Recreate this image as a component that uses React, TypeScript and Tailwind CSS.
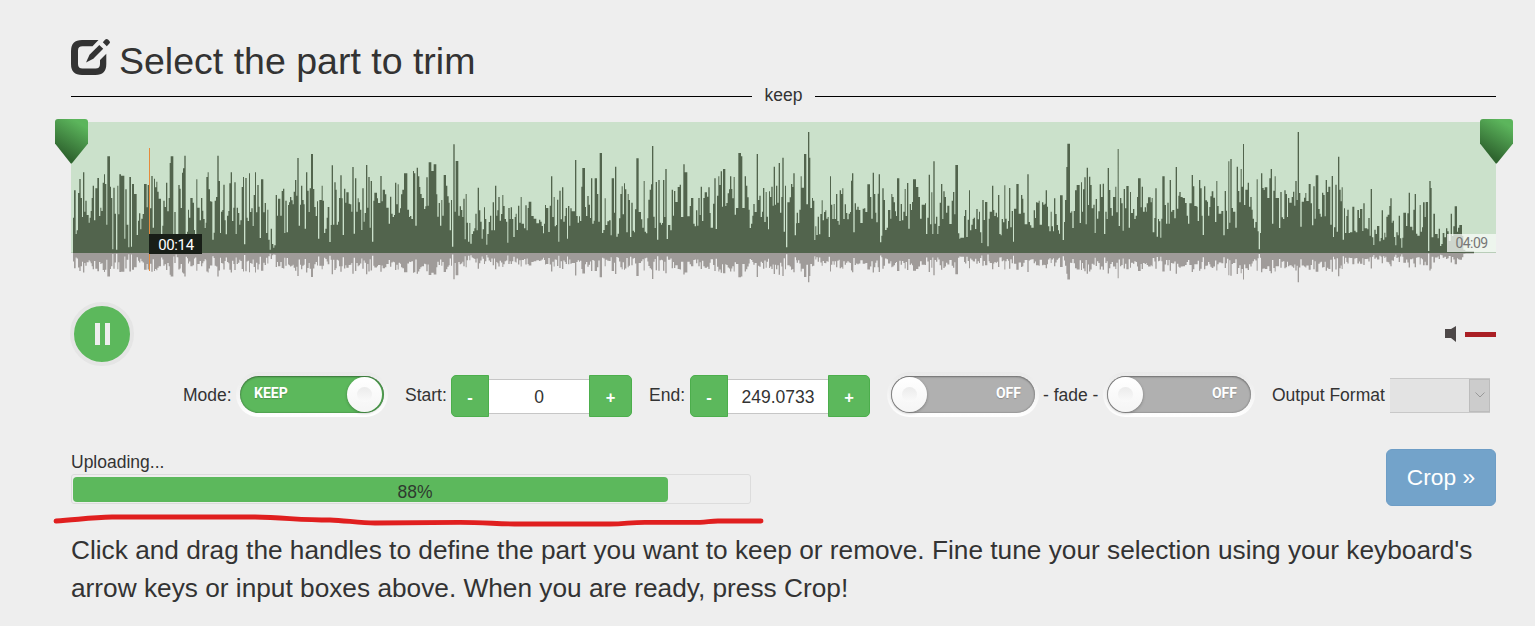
import type { ReactNode } from "react";

/* Amplitude steps: each section lists "x,y" pairs at a third of a pixel. */
const SECTIONS: [number, string][] = [
  [
    50,
    "69,308 72,226 77,357 80,346 84,234 88,192 92,249 96,306 99,172 103,290 106,257 110,300 116,323 119,308 122,288 125,249 128,212 132,316 136,220 142,189 147,303 151,278 154,288 158,203 162,178 165,207 169,329 172,124 180,215 183,249 187,403 190,218 194,296 198,404 202,212 205,298 208,178 213,182 223,371 226,223 230,329 235,397 238,186 243,395 246,207 252,237 260,360 264,317 267,295 271,343 274,311 278,297 282,207 290,277 293,210 300,280 304,183 308,338 312,191 315,217 319,200 322,230 326,251 333,358 337,332 340,257 344,276 348,203 352,289 356,249 359,144 362,124 370,371 373,291 377,395 380,360 385,210 389,221 392,279 396,173 399,160 403,122 407,367 411,350 414,284 417,308 421,249 428,263 432,345 435,359 439,193 442,278 449,316 453,249 457,287 460,312 464,339 467,323 469,186 473,172 476,223 480,259 484,260 487,374 491,353 494,257 498,246 502,122 506,198 510,354 513,290 517,285 520,209 524,316 527,358 531,302 535,288 538,205 542,172 546,318 550,278 553,202 557,357 560,278 564,294 568,329 571,316 575,216 579,186 582,388 586,189 590,308 593,318 597,175 600,291 604,280 608,333 611,240 615,172 618,292 622,210 626,275 629,369 633,193 640,292 644,264 648,354 652,284 655,374 659,404 662,341 666,387 670,398 673,391 677,240 681,302 684,251 691,302 695,228 699,221 703,354 706,257 710,352 714,270 717,262 720,246 724,256 728,268 731,230 735,195 739,242 742,129 746,332 750,269 753,212 757,255 761,268 764,341 768,172 772,227 776,291 779,220 783,117 789,222 793,276 797,303 801,259 804,371 808,255 815,212 818,257 822,354 826,341 830,308 833,276 838,381 842,330 845,151 849,329 853,202 857,224 860,329 864,320 867,249 871,181 875,250 878,360 882,221 886,263 889,232 896,266 900,268 904,290 907,156 911,356 915,190 919,290 923,250 926,262 930,284 934,345 937,220 941,320 944,294 948,150 952,278 955,186 959,338 962,198 966,380 970,257 973,233 981,250 984,264 991,183 995,259 998,224 1005,238 1009,278 1013,278 1016,326 1020,245 1024,296 1028,306 1032,300 1035,203 1039,268 1043,208 1046,293 1050,280 1053,238 1057,224 1062,175 1072,284 1077,306",
  ],
  [
    410,
    "0,303 4,312 9,168 12,175 16,332 20,158 24,184 28,216 31,237 35,249 42,282 46,274 49,187 53,272 56,142 64,168 71,148 79,238 82,305 86,264 90,332 94,255 97,302 101,180 108,212 112,244 116,263 119,346 123,255 126,395 130,88 134,290 137,138 145,302 149,274 153,285 157,306 160,251 164,373 167,237 170,323 174,380 178,324 181,386 185,357 189,349 193,340 196,296 200,346 203,218 207,286 211,320 215,371 218,343 222,277 225,312 229,389 232,357 236,321 240,302 244,346 248,262 252,346 255,212 259,302 262,286 265,246 269,317 273,297 277,240 280,273 284,312 288,320 292,383 295,279 299,312 302,277 306,312 310,366 314,306 317,296 320,345 324,272 328,323 332,246 335,326 342,340 346,271 350,346 353,279 356,260 364,303 371,311 379,325 387,314 391,320 395,333 399,355 402,326 405,270 408,279 415,351 419,272 423,184 427,306 431,246 434,334 438,330 441,254 445,380 448,227 452,313 456,217 460,320 464,303 467,279 471,371 474,273 478,332 481,280 485,289 495,135 499,303 503,323 507,304 510,318 514,215 517,159 525,276 528,303 532,243 536,269 540,309 543,190 547,326 551,317 554,190 561,237 565,320 569,114 576,354 580,345 584,250 587,330 592,319 597,316 602,361 605,190 612,293 615,155 619,365 623,356 627,310 631,237 635,214 638,298 642,205 645,223 649,352 653,237 656,255 660,366 664,263 668,347 672,352 675,283 679,130 686,291 693,313 697,338 701,198 704,350 708,355 712,310 715,254 719,224 723,208 726,93 730,305 734,339 737,201 741,374 745,195 749,323 753,329 756,324 759,195 763,306 766,162 770,372 774,330 781,346 785,224 789,302 792,228 796,261 803,216 809,209 813,306 820,148 824,172 832,304 839,273 843,249 850,326 854,334 858,286 862,332 865,249 869,300 872,215 876,318 880,249 884,232 891,245 895,217 899,294 902,338 909,266 913,190 917,342 921,242 925,184 928,210 932,169 936,275 939,162 946,273 949,264 953,235 957,223 960,184 964,222 967,250 971,186 974,299 978,279 985,114 993,124 997,279 1004,184 1008,212 1012,247 1016,284 1019,339 1023,326 1027,302 1030,267 1034,291 1040,117 1044,255 1048,242 1052,306 1056,290 1059,219 1063,321 1067,231 1070,305 1074,343 1077,229",
  ],
  [
    770,
    "0,246 4,215 8,272 11,155 15,269 18,212 22,263 26,144 30,293 34,246 37,128 41,350 45,212 48,397 52,262 59,247 63,207 67,216 70,175 74,361 78,325 80,293 84,324 88,284 92,184 95,218 102,117 109,268 114,51 118,128 121,279 126,249 129,257 133,375 136,334 139,360 143,305 147,358 151,297 155,256 158,316 162,291 166,286 169,311 173,306 176,366 180,184 183,269 187,312 191,267 194,312 198,237 202,318 206,329 209,226 213,237 217,220 220,312 224,268 228,294 232,313 236,296 240,291 243,197 246,175 250,352 254,265 258,284 262,275 266,285 271,324 278,281 282,280 286,291 292,208 300,246 304,311 308,173 312,237 316,293 319,322 323,236 326,178 330,382 334,362 337,220 341,255 345,345 350,338 354,285 361,311 364,237 367,246 371,262 375,289 378,303 381,190 388,318 392,267 396,316 400,290 404,222 407,303 411,204 415,341 419,267 423,285 426,261 429,193 438,216 445,246 450,311 455,269 465,265 468,357 472,308 476,179 480,328 484,232 487,357 490,139 494,326 498,305 502,357 505,333 509,263 513,207 517,312 520,229 524,246 528,293 532,272 538,327 545,257 549,231 553,298 556,150 564,355 568,371 571,368 582,303 585,285 589,366 593,314 597,226 600,346 604,329 608,312 611,308 615,342 619,282 623,313 627,290 630,352 634,384 637,255 641,315 645,261 652,394 656,311 659,290 666,212 670,285 673,303 677,293 681,307 684,240 688,357 692,361 695,312 699,322 703,211 706,311 710,341 714,318 717,219 721,337 725,288 729,380 732,281 739,207 746,296 753,240 757,251 760,293 764,328 772,178 776,321 780,331 784,338 791,286 795,309 798,262 802,263 806,257 809,329 816,262 820,269 824,266 827,226 831,275 834,334 838,349 842,290 845,334 849,349 852,250 856,297 860,330 864,346 867,356 870,241 878,375 882,321 885,255 889,156 892,86 900,293 904,289 907,339 911,288 915,226 920,210 929,324 933,202 936,290 939,223 943,187 947,328 950,158 954,270 957,185 961,210 965,280 970,269 974,354 977,252 981,311 985,289 989,208 993,246 998,206 1002,357 1006,290 1010,312 1013,159 1017,225 1021,279 1025,302 1029,246 1036,215 1039,292 1043,102 1046,333 1050,249 1054,265 1058,347 1061,222 1065,280 1069,213 1076,338",
  ],
  [
    1130,
    "0,231 3,294 9,282 13,312 17,302 21,246 24,190 32,277 35,215 39,290 44,277 48,290 50,265 54,247 62,262 65,249 68,352 73,309 76,220 80,365 84,312 87,319 91,368 94,311 97,184 104,270 108,326 112,263 116,326 119,195 123,290 127,285 133,310 137,156 141,281 145,242 148,231 152,246 158,249 165,264 170,302 174,326 178,265 185,180 189,214 193,273 200,275 203,318 207,195 211,220 215,302 218,360 222,214 226,256 231,260 234,302 238,276 241,244 245,229 250,248 255,321 259,198 262,273 266,296 274,288 280,361 284,228 288,287 291,342 295,139 298,323 301,132 305,279 309,290 316,338 320,155 324,228 328,262 332,162 335,215 339,87 342,270 346,224 353,203 357,275 361,246 365,284 368,311 372,338 376,321 380,193 383,349 386,403 390,354 393,175 397,219 401,225 404,217 412,249 418,190 422,162 426,326 430,227 434,184 437,249 447,339 451,231 455,307 459,312 463,226 467,237 471,306 474,249 478,263 485,246 489,230 493,272 496,198 500,255 503,51 507,234 511,335 515,260 522,248 526,234 529,258 536,207 542,265 546,331 550,214 554,311 557,181 565,282 569,296 572,305 576,233 580,240 584,304 587,195 591,231 595,215 601,329 605,183 609,366 612,337 616,209 620,350 624,125 628,224 632,259 635,217 638,374 642,280 645,354 649,303 652,284 656,354 660,352 667,275 673,347 677,352 682,285 687,309 690,282 697,348 700,265 704,340 712,343 715,309 719,362 722,222 726,367 730,390 733,344 737,357 741,333 748,379 752,369 755,286 759,374 763,353 766,367 769,305 773,299 778,273 781,250 785,323 788,317 792,366 796,391 799,352 803,361 806,302 810,370 814,398 817,368 820,293 828,333 832,295 836,233 840,335 847,346 850,284 854,237 858,356 862,362 869,270 872,350 876,337 879,262 884,306 887,261 894,408 898,198 902,219 905,367 910,296 915,357 923,370 926,341 930,393 934,387 938,354 943,367 948,340 952,349 956,378 962,296 966,363 970,334 974,274 981,350 984,338 988,330 996,362 1000,404 1006,408 1032,412",
  ],
];

const STEPS = SECTIONS.flatMap(([origin, text]) =>
  text.split(" ").map((pair) => {
    const [x, y] = pair.split(",").map(Number);
    return [origin - 71 + x / 3, (414 - y) / 3] as const;
  }),
);

function outline(base: number, scale: number) {
  let d = `M${STEPS[0][0].toFixed(2)} ${base}`;
  for (const [x, h] of STEPS) d += `H${x.toFixed(2)}V${(base - h * scale).toFixed(2)}`;
  return `${d}H1403V${base}Z`;
}

function Handle({ id, className }: { id: string; className: string }) {
  return (
    <svg className={`absolute -top-[3px] h-[45px] w-[33px] ${className}`} viewBox="0 0 33 45">
      <defs>
        <linearGradient id={id} x1="0.75" y1="0" x2="0.3" y2="1">
          <stop offset="0.08" stopColor="#5cb55c" />
          <stop offset="0.85" stopColor="#2f652f" />
        </linearGradient>
      </defs>
      <path d="M3 0H30Q33 0 33 3V24.5L17.2 44Q16.3 45 15.4 44L0 24.5V3Q0 0 3 0Z" fill={`url(#${id})`} />
    </svg>
  );
}

function Waveform() {
  return (
    <div className="relative mt-4 h-[164px]">
      <div className="h-[131px] bg-[#cbe1cb]" />
      <svg className="absolute left-0 top-0 h-[164px] w-[1425px]" viewBox="0 0 1425 164">
        <path d="M0 130.5H1425" stroke="#b9cdb9" strokeWidth="1" />
        <path d={outline(131, 1)} fill="#52644d" />
        <path d={outline(131, -0.242)} fill="#9f9b99" />
        <path d="M2 130.5H1403" stroke="#52644d" strokeWidth="1" />
      </svg>
      <div className="absolute left-[78px] top-[26px] h-[123px] w-px bg-[#e58a3c]" />
      <div className="absolute left-[78px] top-[112px] flex h-5 w-[53px] items-center justify-center bg-[#181e17] pl-px pt-px font-[Roboto,sans-serif] text-[15px] tracking-[-0.4px] text-white">
        00:14
      </div>
      <div className="absolute right-0 top-[112px] flex h-[18px] w-[49px] items-center justify-center bg-[#f8fbf8]/75 font-[Roboto,sans-serif] text-[14px] tracking-[-0.6px] text-[#777]">
        04:09
      </div>
      <Handle id="handle-start" className="-left-4" />
      <Handle id="handle-end" className="-right-[17px]" />
    </div>
  );
}

function Toggle({ on, label }: { on?: boolean; label: string }) {
  return (
    <div
      className={`-mt-[3px] flex h-[45px] w-[152px] shrink-0 rounded-full bg-linear-to-b from-[#e9e9e9] to-white p-1 ${on ? "flex-row" : "flex-row-reverse"}`}
    >
      <div
        className={`flex h-[37px] w-36 items-center justify-between rounded-full pb-px shadow-[inset_0_1px_2px_rgba(0,0,0,0.3),inset_0_0_2px_rgba(0,0,0,0.35)] ${on ? "bg-[#5cb85c] pl-3.5 pr-0.5" : "flex-row-reverse bg-[#b0b0b0] pl-px pr-3.5"}`}
      >
        <span className="pb-[3px] font-[Roboto,sans-serif] text-[14px] font-bold leading-none text-white [text-shadow:0_1px_1px_rgba(0,0,0,0.2)]">
          {label}
        </span>
        <span className="mt-px flex size-[35px] items-center justify-center rounded-full bg-linear-to-b from-white to-[#f5f5f5] shadow-[0_1px_3px_rgba(0,0,0,0.3)]">
          <span className="size-[15px] rounded-full bg-linear-to-b from-[#ebebeb] to-[#fafafa]" />
        </span>
      </div>
    </div>
  );
}

function StepButton({ children, className }: { children: ReactNode; className: string }) {
  return (
    <button
      className={`h-[42px] border border-[#4cae4c] bg-[#5cb85c] pt-0.5 text-[16.5px] font-bold leading-none text-white ${className}`}
    >
      {children}
    </button>
  );
}

function Stepper({ value, last }: { value: string; last: string }) {
  return (
    <div className="flex items-center">
      <StepButton className="w-[38px] rounded-l-[5px]">-</StepButton>
      <div className="flex h-[35px] w-[100px] items-center justify-center border-y border-[#c6c6c6] bg-white pt-px text-[17.5px] text-[#333]">
        {value}
      </div>
      <StepButton className={`rounded-r-[5px] ${last}`}>+</StepButton>
    </div>
  );
}

export default function App() {
  return (
    <div className="relative h-[626px] w-[1535px] overflow-hidden bg-[#eee] pl-[71px] pr-[39px] font-['Liberation_Sans',Arial,sans-serif] text-[17.5px] leading-5 text-[#333]">
      <h1 className="flex h-[85px] pt-[38px] text-[37.5px] leading-[46px]">
        <svg className="mr-2 h-[38px] w-10 shrink-0" viewBox="0 0 40 38" fill="#333">
          <path d="M27.5 2L21.5 8.3H11.5Q7 8.3 7 12.5V26Q7 30.5 11.5 30.5H24.5Q29 30.5 29 26V22L35.3 15.8V26Q35.3 37 24.5 37H11Q0 37 0 26V13Q0 2 11 2Z" />
          <path d="M15 24.5L18.5 16.8L28.3 7L32.2 10.8L22.3 20.8Z" />
          <path d="M31.8 4.2L34.3 1.6Q35.6 .4 37 1.6L38.4 3Q39.7 4.2 38.4 5.6L35.8 8.2Z" />
        </svg>
        <span className="whitespace-nowrap">Select the part to trim</span>
      </h1>
      <div className="flex h-[21px] items-center">
        <span className="h-px w-[681px] translate-y-px bg-black" />
        <span className="w-[63px] pb-0.5 text-center">keep</span>
        <span className="h-px grow translate-y-px bg-black" />
      </div>
      <Waveform />

      <div className="-ml-px mt-4 flex h-16 items-center justify-between">
        <button className="flex size-16 items-center justify-center gap-[5px] rounded-full border-4 border-[#e5e5e5] bg-[#5cb85c]">
          <span className="h-[22px] w-[5px] bg-[#eee]" />
          <span className="h-[22px] w-[5px] bg-[#eee]" />
        </button>
        <div className="flex items-center gap-[9px]">
          <svg className="h-4 w-[11px]" viewBox="0 0 11 16">
            <path d="M0 3H6L11 0V16L6 12H0Z" fill="#4d4848" />
          </svg>
          <span className="h-[5px] w-[31px] bg-[#aa1f24]" />
        </div>
      </div>

      <div className="mt-[7px] flex h-[46px] items-center whitespace-nowrap pl-28">
        <span className="w-[53px] pb-0.5">Mode:</span>
        <Toggle on label="KEEP" />
        <span className="ml-[17px] w-[46px] pb-0.5">Start:</span>
        <Stepper value="0" last="w-[43px]" />
        <span className="ml-[17px] w-[41px] pb-0.5">End:</span>
        <Stepper value="249.0733" last="w-[42px]" />
        <span className="ml-[17px]">
          <Toggle label="OFF" />
        </span>
        <span className="w-[64px] pb-0.5 pl-1">- fade -</span>
        <Toggle label="OFF" />
        <span className="ml-[17px] w-[118px] pb-0.5">Output Format</span>
        <div className="-mt-0.5 flex h-[35px] w-[100px] justify-end border-y border-[#c8c8c8] bg-[#e3e3e3]">
          <span className="flex w-[21px] items-center justify-center border border-[#bcbcbc] bg-[#ccc]">
            <svg className="h-1.5 w-2.5" viewBox="0 0 10 6">
              <path d="M.5 .5L5 5L9.5 .5" fill="none" stroke="#999" />
            </svg>
          </span>
        </div>
      </div>

      <div className="mt-[29px] flex h-[58px] justify-between">
        <div className="w-[680px] pt-1">
          <div className="h-[22px]">Uploading...</div>
          <div className="h-[30px] rounded-[3px] border border-[#dcdcdc] p-px pt-0.5">
            <div className="flex h-[25px] w-[595px] items-center justify-center rounded-[4px] bg-[#5cb85c] pl-[89px] pt-1 text-[#2f3b2f]">
              <span className="w-full text-center">88%</span>
            </div>
          </div>
        </div>
        <button className="mt-px h-[57px] w-[110px] rounded-md border border-[#6d9dc6] bg-[#73a3ca] pb-0.5 text-[22.75px] text-white">
          Crop »
        </button>
      </div>

      <p className="mt-[25px] whitespace-nowrap text-[26.25px] leading-[38px]">
        Click and drag the handles to define the part you want to keep or remove. Fine tune your selection using your keyboard's
        <br />
        arrow keys or input boxes above. When you are ready, press Crop!
      </p>

      <svg className="absolute left-[50px] top-[510px] h-5 w-[720px]" viewBox="50 510 720 20">
        <path
          d="M56 521C75 520 90 517.5 112 517H255C285 517.5 300 520 330 520C345 520.5 360 523 375 523L460 522.3C485 522.5 500 524 520 524H610C625 524 630 522.3 645 522.3H700C707 522.3 710 521 718 521H761"
          fill="none"
          stroke="#e01f1f"
          strokeWidth="4.8"
          strokeLinecap="round"
          strokeLinejoin="round"
        />
      </svg>
    </div>
  );
}
